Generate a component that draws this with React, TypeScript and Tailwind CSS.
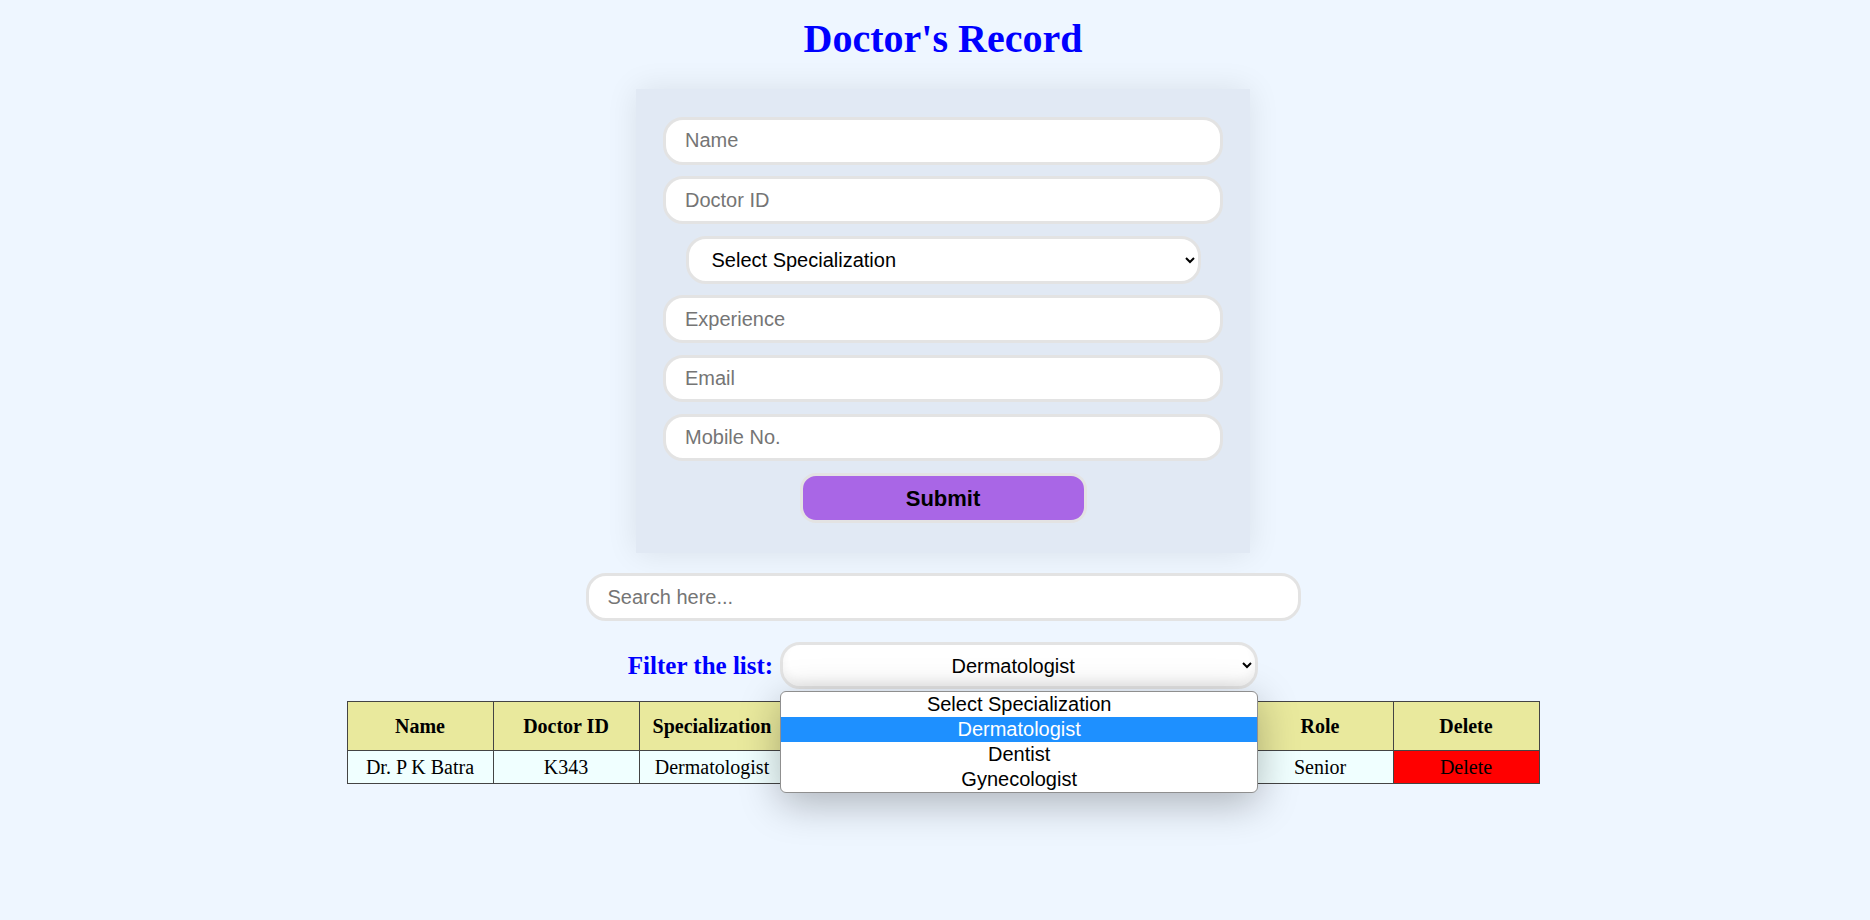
import React, { useState } from 'react';

type Doctor = {
  name: string;
  doctorId: string;
  specialization: string;
  experience: string;
  email: string;
  mobile: string;
  role: string;
};

const specializations = ['Dermatologist', 'Dentist', 'Gynecologist'];

const doctors: Doctor[] = [
  {
    name: 'Dr. P K Batra',
    doctorId: 'K343',
    specialization: 'Dermatologist',
    experience: '12',
    email: 'pk@mail.in',
    mobile: '98765432',
    role: 'Senior',
  },
];

const columns = [
  { label: 'Name', width: 'w-[146px]' },
  { label: 'Doctor ID', width: 'w-[146px]' },
  { label: 'Specialization', width: 'w-[146px]' },
  { label: 'Experience', width: 'w-[154px]' },
  { label: 'Email', width: 'w-[154px]' },
  { label: 'Mobile No.', width: 'w-[154px]' },
  { label: 'Role', width: 'w-[146px]' },
  { label: 'Delete', width: 'w-[146px]' },
];

const inputCls =
  'block w-full h-[47.5px] mb-[11.8px] px-[19px] bg-white border-[3px] border-[#e3e3e3] rounded-[20px] text-[20px] leading-[23px] text-black placeholder:text-[#757575] outline-none';

export default function App() {
  const [filter, setFilter] = useState('Dermatologist');
  const [search, setSearch] = useState('');

  const rows = doctors.filter(
    (d) =>
      (filter === '' || d.specialization === filter) &&
      d.name.toLowerCase().includes(search.toLowerCase()),
  );

  return (
    <div className="min-h-screen w-full bg-[#eef6ff] pl-4 font-['Liberation_Sans',Arial,sans-serif]">
      <div className="flex flex-col items-center">
        <h1 className="mt-[15.5px] text-[40px] leading-[46px] font-bold text-[#0000ff] font-['Liberation_Serif','Times_New_Roman',serif]">
          Doctor's Record
        </h1>

        <form
          onSubmit={(e) => e.preventDefault()}
          className="mt-[27.5px] w-[614px] bg-[#e1e9f4] px-[27px] pt-[28px] pb-[30px] shadow-[0_0_30px_rgba(0,0,0,0.09)] flex flex-col items-center"
        >
          <input className={inputCls} placeholder="Name" />
          <input className={inputCls} placeholder="Doctor ID" />
          <select
            defaultValue=""
            className="block w-[515px] h-[48px] mb-[11.8px] pl-[19px] pr-[6px] bg-white border-[3px] border-[#e3e3e3] rounded-[20px] text-[20px] text-black outline-none"
          >
            <option value="">Select Specialization</option>
            {specializations.map((s) => (
              <option key={s} value={s}>
                {s}
              </option>
            ))}
          </select>
          <input className={inputCls} placeholder="Experience" />
          <input className={inputCls} placeholder="Email" />
          <input className={inputCls} placeholder="Mobile No." />
          <button
            type="submit"
            className="shrink-0 w-[287px] h-[50px] bg-[#a966e6] border-[3px] border-[#e3e3e3] rounded-[16px] text-[22px] font-bold text-black"
          >
            Submit
          </button>
        </form>

        <input
          value={search}
          onChange={(e) => setSearch(e.target.value)}
          placeholder="Search here..."
          className="mt-[20px] w-[715px] h-[47.5px] px-[19px] bg-white border-[3px] border-[#e3e3e3] rounded-[20px] text-[20px] text-black placeholder:text-[#757575] outline-none"
        />

        <div className="mt-[21px] flex items-center gap-[7px]">
          <label className="text-[25px] leading-[28px] font-bold text-[#0000ff] font-['Liberation_Serif','Times_New_Roman',serif]">
            Filter the list:
          </label>
          <div className="relative">
            <select
              value={filter}
              onChange={(e) => setFilter(e.target.value)}
              className="block w-[478px] h-[47.5px] px-[6px] bg-white border-[3px] border-[#e3e3e3] rounded-[20px] text-[20px] text-black text-center [text-align-last:center] outline-none shadow-[inset_0_-6px_8px_rgba(0,0,0,0.05)]"
            >
              <option value="">Select Specialization</option>
              {specializations.map((s) => (
                <option key={s} value={s}>
                  {s}
                </option>
              ))}
            </select>

            {/* open dropdown list */}
            <div className="absolute left-0 top-[calc(100%+2px)] z-10 w-full bg-white border border-[#8f8f8f] rounded-[6px] overflow-hidden shadow-[0_10px_40px_rgba(0,0,0,0.28)]">
              {['Select Specialization', ...specializations].map((opt) => (
                <div
                  key={opt}
                  className={`h-[25px] text-center text-[20px] leading-[25px] ${
                    opt === filter ? 'bg-[#1e90ff] text-white' : 'text-black'
                  }`}
                >
                  {opt}
                </div>
              ))}
            </div>
          </div>
        </div>

        <table className="mt-[12px] w-[1192px] table-fixed border-collapse font-['Liberation_Serif','Times_New_Roman',serif] text-[20px] leading-[23px] text-black">
          <thead>
            <tr className="bg-[#e9e99d]">
              {columns.map((c) => (
                <th
                  key={c.label}
                  className={`${c.width} border border-[#444] py-[12.5px] font-bold text-center`}
                >
                  {c.label}
                </th>
              ))}
            </tr>
          </thead>
          <tbody>
            {rows.map((d) => (
              <tr key={d.doctorId} className="bg-[#f0ffff]">
                <td className="border border-[#444] py-[4.5px] text-center">{d.name}</td>
                <td className="border border-[#444] py-[4.5px] text-center">{d.doctorId}</td>
                <td className="border border-[#444] py-[4.5px] text-center">{d.specialization}</td>
                <td className="border border-[#444] py-[4.5px] text-center">{d.experience}</td>
                <td className="border border-[#444] py-[4.5px] text-center">{d.email}</td>
                <td className="border border-[#444] py-[4.5px] text-center">{d.mobile}</td>
                <td className="border border-[#444] py-[4.5px] text-center">{d.role}</td>
                <td className="border border-[#444] py-[4.5px] text-center bg-[#ff0000]">Delete</td>
              </tr>
            ))}
          </tbody>
        </table>
      </div>
    </div>
  );
}
